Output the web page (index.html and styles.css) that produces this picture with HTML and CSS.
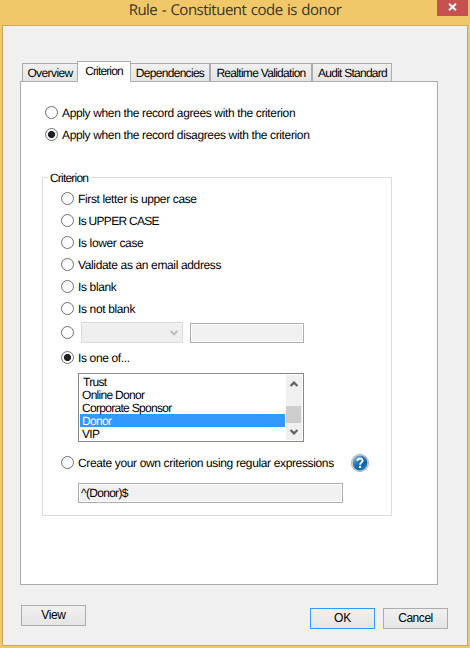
FILE: index.html
```html
<!DOCTYPE html>
<html lang="en">
<head>
<meta charset="utf-8">
<title>Rule - Constituent code is donor</title>
<link rel="stylesheet" href="styles.css">
</head>
<body>
<div class="window">
  <header class="titlebar">
    <h1>Rule - Constituent code is donor</h1>
    <button class="close" aria-label="Close"><svg width="9" height="8" viewBox="0 0 9 8"><path d="M1 0.7 8 7.3M8 0.7 1 7.3" stroke="#fff" stroke-width="1.9"/></svg></button>
  </header>
  <main class="client">
    <nav class="tabs">
      <div class="tab overview"><span>Overview</span></div>
      <div class="tab active"><span>Criterion</span></div>
      <div class="tab dependencies"><span>Dependencies</span></div>
      <div class="tab realtime"><span>Realtime Validation</span></div>
      <div class="tab audit"><span>Audit Standard</span></div>
    </nav>
    <section class="panel">
      <div class="apply">
        <label class="option"><i class="radio"></i><span>Apply when the record agrees with the criterion</span></label>
        <label class="option"><i class="radio checked"></i><span>Apply when the record disagrees with the criterion</span></label>
      </div>
      <div class="group">
        <div class="legend"><span>Criterion</span></div>
        <div class="options">
          <label class="option"><i class="radio"></i><span>First letter is upper case</span></label>
          <label class="option"><i class="radio"></i><span class="caps">Is UPPER CASE</span></label>
          <label class="option"><i class="radio"></i><span>Is lower case</span></label>
          <label class="option"><i class="radio"></i><span>Validate as an email address</span></label>
          <label class="option"><i class="radio"></i><span>Is blank</span></label>
          <label class="option"><i class="radio"></i><span>Is not blank</span></label>
        </div>
        <div class="compare">
          <i class="radio"></i>
          <div class="combo"><svg width="8" height="6" viewBox="0 0 8 6"><path d="M0.6 0.8 4 4.3 7.4 0.8" fill="none" stroke="#b9b9b9" stroke-width="1.9"/></svg></div>
          <div class="field value"></div>
        </div>
        <label class="option one-of"><i class="radio checked"></i><span>Is one of...</span></label>
        <div class="listbox">
          <ul>
            <li class="indent">Trust</li>
            <li>Online Donor</li>
            <li>Corporate Sponsor</li>
            <li class="selected">Donor</li>
            <li>VIP</li>
          </ul>
          <div class="scrollbar">
            <svg width="8" height="6" viewBox="0 0 8 6"><path d="M0.5 5 4 1.6 7.5 5" fill="none" stroke="#606060" stroke-width="2.2"/></svg>
            <div class="thumb"></div>
            <svg width="8" height="6" viewBox="0 0 8 6"><path d="M0.5 1 4 4.4 7.5 1" fill="none" stroke="#606060" stroke-width="2.2"/></svg>
          </div>
        </div>
        <div class="custom">
          <label class="option"><i class="radio"></i><span>Create your own criterion using regular expressions</span></label>
          <svg class="help" width="18" height="18" viewBox="0 0 18 18">
            <defs><linearGradient id="ball" x1="0" y1="0" x2="1" y2="1"><stop offset="0" stop-color="#8fc2e4"/><stop offset=".45" stop-color="#1d70b0"/><stop offset=".7" stop-color="#0965ae"/><stop offset="1" stop-color="#35aee9"/></linearGradient></defs>
            <circle cx="9" cy="9" r="8.5" fill="#d9dfe3" stroke="#999fa5" stroke-width=".8"/>
            <circle cx="9" cy="9" r="7.4" fill="url(#ball)"/>
            <path d="M6.4 7C6.4 3.7 11.6 3.8 11.6 6.6 11.6 8.5 9.1 8.6 9.1 10.7" fill="none" stroke="#fff" stroke-width="2"/>
            <circle cx="9.1" cy="13" r="1.2" fill="#fff"/>
          </svg>
        </div>
        <div class="field regex">^(Donor)$</div>
      </div>
    </section>
    <footer class="buttons">
      <button class="btn view">View</button>
      <button class="btn ok">OK</button>
      <button class="btn cancel">Cancel</button>
    </footer>
  </main>
</div>
</body>
</html>
```
FILE: styles.css
```css
* { box-sizing: border-box; }
body {
  margin: 0;
  font: 12px/13px "Liberation Sans", Arial, sans-serif;
  letter-spacing: -0.36px;
  text-rendering: geometricPrecision;
  color: #000;
}
.window {
  width: 470px;
  height: 648px;
  padding: 0 2px 2px;
  background: #f0c869;
}
.titlebar {
  position: relative;
  height: 25px;
}
h1 {
  margin: 0;
  font: 15px/20px "Open Sans", "Noto Sans", sans-serif;
  letter-spacing: -0.5px;
  word-spacing: 1px;
  text-align: center;
  white-space: nowrap;
  color: #3b3324;
}
.close {
  position: absolute;
  top: 0;
  right: -2px;
  width: 33px;
  height: 16px;
  padding: 0 0 3px;
  display: flex;
  align-items: center;
  justify-content: center;
  border: 0;
  border-right: 2px solid #f0c869;
  background: #c75050;
}
.client {
  height: 621px;
  border: 1px solid #c9a95f;
  background: #f0f0f0;
  padding: 35px 0 0 17px;
}
.tabs {
  display: flex;
  align-items: flex-end;
  height: 20px;
  padding-left: 2px;
  letter-spacing: -0.7px;
}
.tab {
  height: 18px;
  flex: none;
  display: flex;
  align-items: center;
  justify-content: center;
  padding-top: 1px;
  border: 1px solid #acacac;
  border-bottom: 0;
  background: linear-gradient(#f0f0f0, #e5e5e5);
  white-space: nowrap;
}
.overview { width: 55px; border-right: 0; letter-spacing: -0.6px; }
.active {
  width: 54px;
  height: 21px;
  margin-bottom: -1px;
  padding: 0 0 2px;
  background: #fff;
  position: relative;
  letter-spacing: -0.85px;
}
.dependencies { width: 79px; border-left: 0; }
.realtime { width: 102px; }
.audit { width: 80px; padding-left: 1px; letter-spacing: -0.75px; }
.panel {
  width: 418px;
  height: 504px;
  border: 1px solid #acacac;
  background: #fff;
  padding: 20px 0 0 21px;
}
.option {
  display: flex;
  align-items: center;
  height: 22px;
  white-space: nowrap;
}
.option span { margin-left: 4px; padding-top: 1px; }
.option .caps { letter-spacing: -0.7px; }
.radio {
  flex: none;
  width: 13px;
  height: 13px;
  border: 1px solid #707070;
  border-radius: 50%;
  background: #fff;
}
.option .radio { margin-bottom: 1px; }
.checked { background: radial-gradient(circle at center, #222 3.2px, #fff 3.9px); }
.apply { padding-left: 3px; }
.group {
  width: 350px;
  height: 339px;
  margin-top: 31px;
  border: 1px solid #dcdcdc;
  padding-left: 18px;
}
.legend { height: 10px; margin-left: -14px; letter-spacing: -0.8px; }
.legend span {
  display: block;
  width: 43px;
  margin-left: 1px;
  padding-left: 2px;
  background: #fff;
  transform: translateY(-6px);
}
.compare {
  display: flex;
  align-items: center;
  height: 21px;
  margin-top: 2px;
}
.combo {
  display: flex;
  align-items: center;
  justify-content: flex-end;
  width: 102px;
  height: 21px;
  margin: 0 7px;
  padding-right: 4px;
  border: 1px solid #d9d9d9;
  background: #efefef;
}
.field {
  height: 20px;
  border: 1px solid #abadb3;
  box-shadow: inset 0 0 0 1px #fff;
  background: #f0f0f0;
}
.value { width: 114px; margin-top: 1px; }
.one-of { margin-top: 4px; }
.listbox {
  display: flex;
  justify-content: space-between;
  width: 226px;
  height: 69px;
  margin: 4px 0 0 17px;
  padding: 1px;
  border: 1px solid #828790;
  letter-spacing: -0.7px;
}
ul { width: 205px; margin: 0; padding: 0; list-style: none; }
li { height: 13px; padding-left: 2px; line-height: 14px; }
.indent { padding-left: 3px; }
.selected { background: #3399ff; color: #fff; }
.scrollbar {
  display: flex;
  flex-direction: column;
  width: 16px;
  height: 65px;
  padding: 6px 0 4px 4px;
  background: #f0f0f0;
}
.thumb {
  flex: none;
  width: 15px;
  height: 17px;
  margin: 19px 0 6px -4px;
  background: #cdcdcd;
}
.custom { display: flex; align-items: center; margin-top: 10px; }
.custom .option { width: 274px; }
.help { margin-left: 16px; }
.regex { width: 265px; margin: 9px 0 0 17px; padding: 3px 2px; letter-spacing: -0.7px; }
.buttons { display: flex; padding-left: 1px; }
.btn {
  width: 65px;
  height: 21px;
  margin-top: 23px;
  padding: 0;
  font: inherit;
  letter-spacing: inherit;
  color: #000;
  border: 1px solid #acacac;
  background: linear-gradient(#f0f0f0, #e5e5e5);
}
.view { margin-top: 20px; }
.ok { margin-left: 224px; border-color: #3399ff; letter-spacing: -0.1px; }
.cancel { margin-left: 8px; letter-spacing: -0.45px; }
```
